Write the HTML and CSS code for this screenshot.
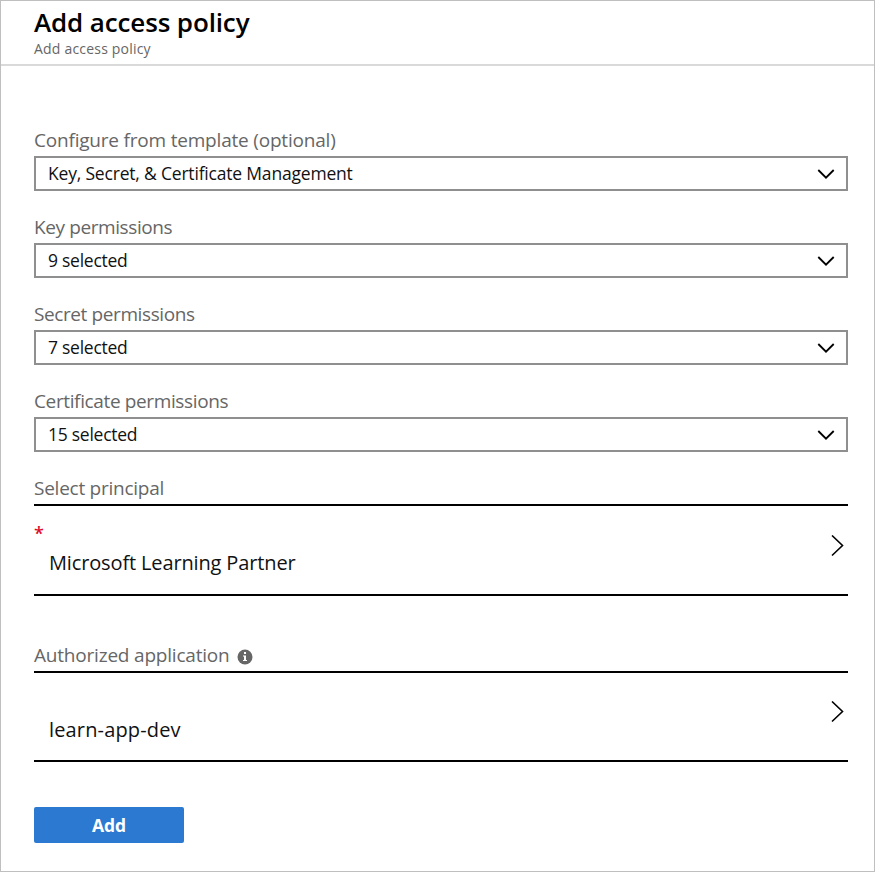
FILE: index.html
```html
<!DOCTYPE html>
<html lang="en">
<head>
<meta charset="utf-8">
<title>Add access policy</title>
<link rel="stylesheet" href="styles.css">
</head>
<body>
<main class="blade">
  <header class="blade-header">
    <h1>Add access policy</h1>
    <p>Add access policy</p>
  </header>
  <form class="form">
    <div class="field">
      <div class="label"><span class="t-template">Configure from template (optional)</span></div>
      <div class="select"><span class="v-template">Key, Secret, &amp; Certificate Management</span><svg class="down" viewBox="0 0 18 12"><path d="M1.300 2 9 9.700 16.700 2"/></svg></div>
    </div>
    <div class="field">
      <div class="label"><span class="t-key">Key permissions</span></div>
      <div class="select"><span class="v-count">9 selected</span><svg class="down" viewBox="0 0 18 12"><path d="M1.300 2 9 9.700 16.700 2"/></svg></div>
    </div>
    <div class="field">
      <div class="label"><span class="t-secret">Secret permissions</span></div>
      <div class="select"><span class="v-count">7 selected</span><svg class="down" viewBox="0 0 18 12"><path d="M1.300 2 9 9.700 16.700 2"/></svg></div>
    </div>
    <div class="field">
      <div class="label"><span class="t-cert">Certificate permissions</span></div>
      <div class="select"><span class="v-count">15 selected</span><svg class="down" viewBox="0 0 18 12"><path d="M1.300 2 9 9.700 16.700 2"/></svg></div>
    </div>
    <div class="field principal">
      <div class="label"><span class="t-principal">Select principal</span></div>
      <div class="picker">
        <div class="picker-text"><span class="required">*</span><span class="picked p-partner">Microsoft Learning Partner</span></div>
        <svg class="right" viewBox="0 0 13 22"><path d="M1 .500 11.500 10.500 1 20.500"/></svg>
      </div>
    </div>
    <div class="field application">
      <div class="label"><span class="t-app">Authorized application</span><svg class="info" viewBox="0 0 16 16"><circle cx="8" cy="8" r="7.5"/><path d="M7 3h2v2H7zM6 6.5h3V11h1v1H6v-1h1V7.500H6z"/></svg></div>
      <div class="picker">
        <div class="picker-text"><span class="required"></span><span class="picked p-app">learn-app-dev</span></div>
        <svg class="right" viewBox="0 0 13 22"><path d="M1 .500 11.500 10.500 1 20.500"/></svg>
      </div>
    </div>
    <button class="add" type="button">Add</button>
  </form>
</main>
</body>
</html>
```
FILE: styles.css
```css
* { box-sizing: border-box; }
body {
  margin: 0;
  background: #fff;
  color: #111;
  font-family: "Open Sans", "Noto Sans", sans-serif;
}
.blade {
  height: 872px;
  border: 1px solid #bfbfbf;
  overflow: hidden;
}
.blade-header {
  height: 65px;
  padding: 4px 33px 0;
  border-bottom: 2px solid #d9d9d9;
}
h1 {
  margin: 0;
  font-size: 26px;
  line-height: 34px;
  font-weight: 600;
  letter-spacing: -0.13px;
  color: #000;
}
.blade-header p {
  margin: 1px 0 0;
  font-size: 14px;
  line-height: 18px;
  letter-spacing: 0.2px;
  color: #666;
}
.form { padding: 60px 26px 0 33px; }
.field { margin-bottom: 22px; }
.label {
  display: flex;
  align-items: center;
  height: 30px;
  padding-bottom: 2px;
  font-size: 19px;
  line-height: 28px;
  color: #666;
}
.t-template, .t-app { letter-spacing: -0.2px; }
.t-key, .t-secret { letter-spacing: -0.4px; }
.t-cert { letter-spacing: -0.37px; }
.t-principal { letter-spacing: -0.25px; }
.select {
  display: flex;
  align-items: center;
  justify-content: space-between;
  height: 35px;
  padding: 0 11px 0 12px;
  border: 2px solid #8f8f8f;
  font-size: 17.5px;
}
.select span { padding-bottom: 1px; }
.v-template { letter-spacing: -0.19px; }
.v-count { letter-spacing: -0.26px; }
svg { flex: none; fill: none; stroke: #000; }
.down { width: 18px; height: 12px; stroke-width: 1.8; }
.picker {
  display: flex;
  justify-content: space-between;
  height: 92px;
  padding-right: 4px;
  border: solid #000;
  border-width: 2px 0;
}
.picker-text { display: flex; flex-direction: column; }
.required { height: 43px; padding-top: 12px; font-size: 18px; line-height: 30px; font-weight: 600; color: #e00b2c; }
.picked { padding-left: 15px; font-size: 20px; line-height: 28px; }
.p-partner { letter-spacing: -0.14px; }
.p-app { letter-spacing: 0.15px; }
.right { width: 13px; height: 22px; margin-top: 29px; stroke-width: 1.6; }
.principal { margin-bottom: 45px; }
.application { margin-bottom: 45px; }
.application .picker { height: 91px; }
.application .right { margin-top: 28px; }
.info { width: 16px; height: 16px; margin: 4px 0 0 7px; stroke: none; }
.info circle { fill: #666; }
.info path { fill: #fff; }
.add {
  display: block;
  width: 150px;
  height: 36px;
  padding: 0;
  border: 0;
  border-radius: 2px;
  background: #2b79d0;
  color: #fff;
  font: 700 17.5px/36px "Open Sans", sans-serif;
}
```
